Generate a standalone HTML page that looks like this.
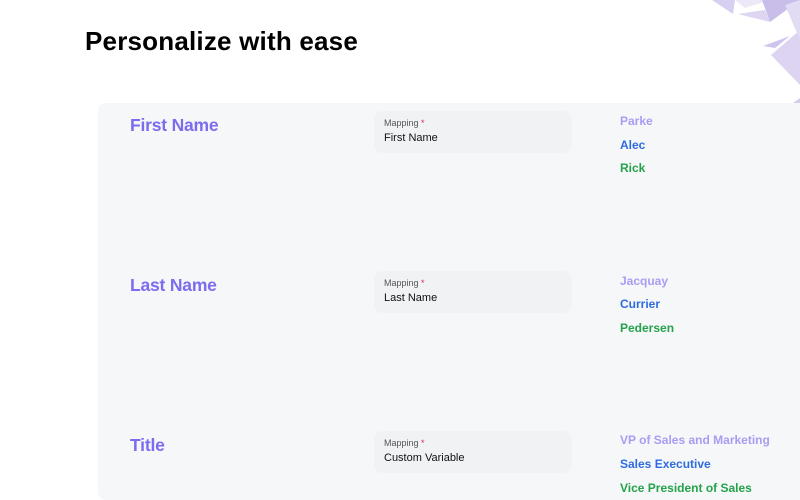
<!DOCTYPE html>
<html><head><style>
body{margin:0;width:800px;height:500px;background:#fff;position:relative;overflow:hidden;font-family:"Liberation Sans",sans-serif}
h1{position:absolute;left:85px;top:26px;margin:0;font-size:26px;font-weight:bold;color:#000;letter-spacing:0.2px}
.panel{position:absolute;left:98px;top:103px;width:720px;height:397px;background:#f5f7f9;border-radius:8px}
.lbl{position:absolute;left:130px;font-size:17.5px;font-weight:bold;color:#7b6cf0;letter-spacing:-0.2px}
.box{position:absolute;left:374px;width:198px;height:42px;background:#f0f2f4;border-radius:8px}
.box .m{position:absolute;left:10px;top:7px;font-size:9px;color:#555}
.box .m b{color:#e0245e;font-weight:normal}
.box .v{position:absolute;left:10px;top:21px;font-size:11px;color:#111}
.n{position:absolute;left:620px;font-size:12px;font-weight:bold}
.p{color:#a99cf3}.b{color:#2f6be0}.g{color:#25a24a}
</style></head><body>
<svg style="position:absolute;left:0;top:0" width="800" height="120">
<polygon points="712,0 735,0 733,14" fill="#d8d0f0"/>
<polygon points="735,0 770,0 745,8" fill="#ece8f8"/>
<polygon points="738,14 765,10 770,22" fill="#ddd5f2"/>
<polygon points="762,0 800,0 770,22" fill="#c9bdea"/>
<polygon points="763,46 790,36 775,48" fill="#cfc4ee"/>
<polygon points="771,55 800,30 800,85" fill="#ddd4f2"/>
<polygon points="785,5 800,0 800,40" fill="#e2dbf4"/>
<polygon points="783,110 800,98 800,117" fill="#d5cbef"/>
</svg>
<h1>Personalize with ease</h1>
<div class="panel"></div>
<div class="lbl" style="top:115px">First Name</div>
<div class="box" style="top:111px"><div class="m">Mapping <b>*</b></div><div class="v">First Name</div></div>
<div class="n p" style="top:114px">Parke</div><div class="n b" style="top:138px">Alec</div><div class="n g" style="top:161px">Rick</div>
<div class="lbl" style="top:275px">Last Name</div>
<div class="box" style="top:271px"><div class="m">Mapping <b>*</b></div><div class="v">Last Name</div></div>
<div class="n p" style="top:274px">Jacquay</div><div class="n b" style="top:297px">Currier</div><div class="n g" style="top:321px">Pedersen</div>
<div class="lbl" style="top:435px">Title</div>
<div class="box" style="top:431px"><div class="m">Mapping <b>*</b></div><div class="v">Custom Variable</div></div>
<div class="n p" style="top:433px">VP of Sales and Marketing</div><div class="n b" style="top:457px">Sales Executive</div><div class="n g" style="top:481px">Vice President of Sales</div>
</body></html>
